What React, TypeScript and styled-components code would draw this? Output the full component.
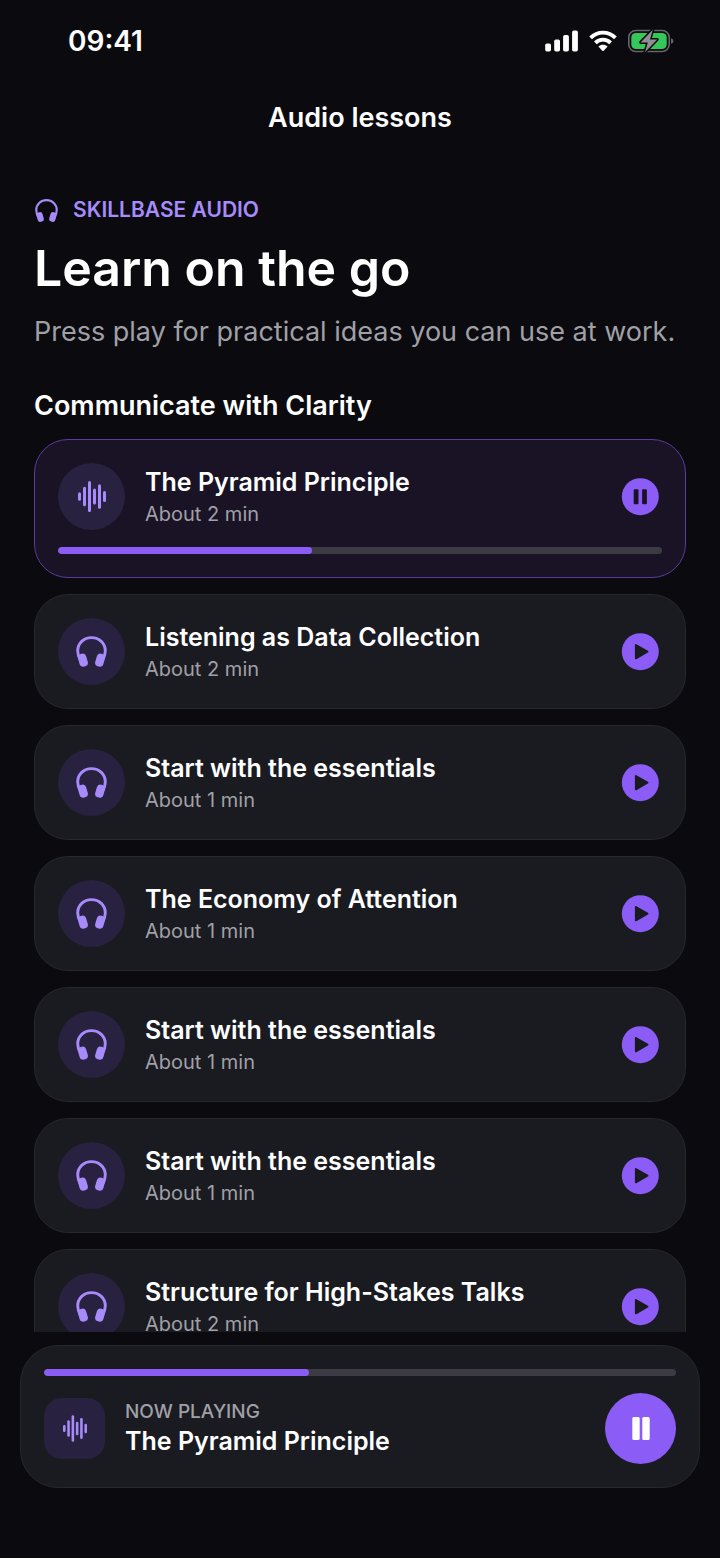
import React from "react";
import styled, { createGlobalStyle, css } from "styled-components";

const color = {
  page: "#0a0a0f",
  card: "#1a1a21",
  cardLine: "#27272c",
  active: "#191325",
  activeLine: "#5a3d9b",
  badge: "#292140",
  accent: "#8b5cf6",
  accentSoft: "#a78bfa",
  track: "#3c3b44",
  text: "#ffffff",
  muted: "#a0a0a7",
};

const GlobalStyle = createGlobalStyle`
  * { box-sizing: border-box; }
  body {
    margin: 0;
    background: ${color.page};
    color: ${color.text};
    font-family: Inter, "Liberation Sans", sans-serif;
  }
  h1, h2, h3, p, ul { margin: 0; padding: 0; }
`;

const Screen = styled.div`
  display: flex;
  flex-direction: column;
  height: 100vh;
  background: ${color.page};
`;

const StatusBar = styled.div`
  display: flex;
  align-items: center;
  justify-content: space-between;
  flex: none;
  height: 82px;
  padding: 0 46px 0 68px;
`;

const Clock = styled.time`
  font-size: 28px;
  line-height: 34px;
  font-weight: 600;
`;

const StatusIcons = styled.div`
  display: flex;
  align-items: center;
  gap: 11px;
  svg { display: block; }
`;

const NavBar = styled.header`
  display: flex;
  align-items: center;
  justify-content: center;
  flex: none;
  height: 72px;
`;

const NavTitle = styled.h2`
  font-size: 27px;
  line-height: 34px;
  font-weight: 600;
`;

const Content = styled.main`
  flex: 1;
  min-height: 0;
  overflow-y: auto;
  scrollbar-width: none;
  padding: 42px 34px 24px;
`;

const Eyebrow = styled.p`
  display: flex;
  align-items: center;
  gap: 15px;
  padding-left: 1px;
  color: ${color.accentSoft};
  font-size: 21px;
  line-height: 28px;
  font-weight: 600;
  svg { display: block; }
`;

const Title = styled.h1`
  margin-top: 12px;
  font-size: 50px;
  line-height: 64px;
  font-weight: 600;
`;

const Lead = styled.p`
  margin-top: 15px;
  color: ${color.muted};
  font-size: 27px;
  line-height: 34px;
`;

const SectionTitle = styled.h2`
  margin-top: 40px;
  font-size: 27px;
  line-height: 34px;
  font-weight: 600;
`;

const LessonList = styled.ul`
  display: flex;
  flex-direction: column;
  gap: 16px;
  margin-top: 16px;
  list-style: none;
`;

const LessonCard = styled.li<{ $active?: boolean }>`
  display: flex;
  flex-direction: column;
  gap: 17px;
  padding: 23px;
  border: 1px solid ${(p) => (p.$active ? color.activeLine : color.cardLine)};
  border-radius: 34px;
  background: ${(p) => (p.$active ? color.active : color.card)};
`;

const Row = styled.div`
  display: flex;
  align-items: center;
  gap: 20px;
`;

const Badge = styled.span<{ $square?: boolean }>`
  display: flex;
  align-items: center;
  justify-content: center;
  flex: none;
  color: ${color.accentSoft};
  background: ${color.badge};
  ${(p) =>
    p.$square
      ? css`
          width: 61px;
          height: 61px;
          border-radius: 18px;
        `
      : css`
          width: 67px;
          height: 67px;
          border-radius: 50%;
        `}
`;

const Labels = styled.div`
  flex: 1;
  min-width: 0;
  padding-top: 2px;
`;

const PlayerLabels = styled(Labels)`
  padding: 0 0 2px;
`;

const LessonTitle = styled.h3`
  font-size: 25px;
  line-height: 32px;
  font-weight: 600;
`;

const Duration = styled.p`
  color: ${color.muted};
  font-size: 20px;
  line-height: 32px;
`;

const Overline = styled.p`
  color: ${color.muted};
  font-size: 19px;
  line-height: 26px;
  font-weight: 500;
`;

const IconButton = styled.button`
  display: flex;
  align-items: center;
  justify-content: center;
  flex: none;
  width: 44px;
  height: 44px;
  padding: 0;
  border: 0;
  background: none;
  color: ${color.accent};
  cursor: pointer;
`;

const RoundButton = styled(IconButton)`
  width: 71px;
  height: 71px;
  border-radius: 50%;
  background: ${color.accent};
  color: ${color.text};
`;

const Track = styled.div`
  height: 7px;
  border-radius: 4px;
  background: ${color.track};
  overflow: hidden;
`;

const Fill = styled.div`
  height: 100%;
  border-radius: 4px;
  background: ${color.accent};
`;

const Player = styled.footer`
  display: flex;
  flex-direction: column;
  flex: none;
  gap: 17px;
  margin: 13px 20px 70px;
  padding: 23px;
  border: 1px solid ${color.cardLine};
  border-radius: 38px;
  background: ${color.card};
`;

const Progress = ({ value }: { value: number }) => (
  <Track role="progressbar" aria-label="Playback" aria-valuemin={0} aria-valuemax={100} aria-valuenow={value}>
    <Fill style={{ width: `${value}%` }} />
  </Track>
);

const Headphones = ({ size = 31 }: { size?: number }) => (
  <svg width={size} height={size} viewBox="0 0 31 31" aria-hidden="true">
    <path
      d="M4.4 24C2.4 20.6 1.7 18 1.7 14.8C1.7 7.2 7.8 1.6 15.5 1.6C23.2 1.6 29.3 7.2 29.3 14.8C29.3 18 28.6 20.6 26.6 24"
      fill="none"
      stroke="currentColor"
      strokeWidth="2.9"
    />
    <g fill="currentColor">
      <rect x="2.7" y="17.7" width="8.4" height="13" rx="3.6" transform="rotate(-16 6.9 24.2)" />
      <rect x="19.9" y="17.7" width="8.4" height="13" rx="3.6" transform="rotate(16 24.1 24.2)" />
    </g>
  </svg>
);

const Waveform = ({ width = 28, height = 31 }: { width?: number; height?: number }) => (
  <svg width={width} height={height} viewBox="0 0 28 31" fill="currentColor" aria-hidden="true">
    {[8.4, 19.4, 31, 16, 24.6, 11].map((h, i) => (
      <rect key={i} x={i * 5} y={(31 - h) / 2} width="3" height={h} rx="1.5" />
    ))}
  </svg>
);

const PlayCircle = () => (
  <svg width="38" height="38" viewBox="0 0 38 38" aria-hidden="true">
    <circle cx="19.3" cy="18.7" r="18.5" fill={color.accent} />
    <path d="M14.9 12.1L26.4 18.7L14.9 25.3Z" fill={color.card} stroke={color.card} strokeWidth="2" strokeLinejoin="round" />
  </svg>
);

const PauseCircle = () => (
  <svg width="38" height="38" viewBox="0 0 38 38" aria-hidden="true">
    <circle cx="19.3" cy="18.7" r="18.5" fill={color.accent} />
    <rect x="12.7" y="11.2" width="4.8" height="15" rx="1" fill={color.active} />
    <rect x="21.1" y="11.2" width="4.8" height="15" rx="1" fill={color.active} />
  </svg>
);

const Signal = () => (
  <svg width="34" height="22" viewBox="0 0 34 22" fill="#fff" aria-hidden="true">
    <rect x="1.2" y="13.5" width="5.8" height="8" rx="1.7" />
    <rect x="10.2" y="9.5" width="5.8" height="12" rx="1.7" />
    <rect x="19.1" y="5" width="5.8" height="16.5" rx="1.7" />
    <rect x="28.1" y="0.5" width="5.8" height="21" rx="1.7" />
  </svg>
);

const Wifi = () => (
  <svg width="28" height="22" viewBox="0 0 28 22" aria-hidden="true">
    <g fill="none" stroke="#fff" strokeWidth="3.8">
      <path d="M1.6 7.9C8.4 0.9 19.6 0.9 26.4 7.9" />
      <path d="M6.4 12.8C10.6 8.6 17.4 8.6 21.6 12.8" />
    </g>
    <path d="M9.4 16.5C12 14.3 16 14.3 18.6 16.5L14.7 20.7Q14 21.4 13.3 20.7Z" fill="#fff" />
  </svg>
);

const Battery = () => (
  <svg width="46" height="26" viewBox="0 0 46 26" aria-hidden="true">
    <rect x="0.8" y="2.5" width="40.4" height="21" rx="7" fill="none" stroke="#66666a" strokeWidth="1.6" />
    <rect x="3.3" y="5" width="35.4" height="16" rx="4.6" fill="#34c759" />
    <path d="M43 10.2C46.2 11 46.2 15 43 15.8Z" fill="#66666a" />
    <path
      d="M24.8 1.8L12.6 14.4H19.8L17 24.2L29.2 11.4H22Z"
      fill="#8e8e93"
      stroke={color.page}
      strokeWidth="3"
      strokeLinejoin="round"
      paintOrder="stroke"
    />
  </svg>
);

const Pause = () => (
  <svg width="18" height="23" viewBox="0 0 18 23" fill="currentColor" aria-hidden="true">
    <rect x="0.3" width="7.4" height="23" rx="1.6" />
    <rect x="10.3" width="7.4" height="23" rx="1.6" />
  </svg>
);

const lessons = [
  { title: "The Pyramid Principle", minutes: 2, progress: 42 },
  { title: "Listening as Data Collection", minutes: 2 },
  { title: "Start with the essentials", minutes: 1 },
  { title: "The Economy of Attention", minutes: 1 },
  { title: "Start with the essentials", minutes: 1 },
  { title: "Start with the essentials", minutes: 1 },
  { title: "Structure for High-Stakes Talks", minutes: 2 },
];

export default function App() {
  return (
    <Screen>
      <GlobalStyle />
      <StatusBar>
        <Clock>09:41</Clock>
        <StatusIcons>
          <Signal />
          <Wifi />
          <Battery />
        </StatusIcons>
      </StatusBar>
      <NavBar>
        <NavTitle>Audio lessons</NavTitle>
      </NavBar>
      <Content>
        <Eyebrow>
          <Headphones size={23} />
          SKILLBASE AUDIO
        </Eyebrow>
        <Title>Learn on the go</Title>
        <Lead>Press play for practical ideas you can use at work.</Lead>
        <SectionTitle>Communicate with Clarity</SectionTitle>
        <LessonList>
          {lessons.map(({ title, minutes, progress }, i) => {
            const active = progress !== undefined;
            return (
              <LessonCard key={i} $active={active}>
                <Row>
                  <Badge>{active ? <Waveform /> : <Headphones />}</Badge>
                  <Labels>
                    <LessonTitle>{title}</LessonTitle>
                    <Duration>About {minutes} min</Duration>
                  </Labels>
                  <IconButton type="button" aria-label={`${active ? "Pause" : "Play"} ${title}`}>
                    {active ? <PauseCircle /> : <PlayCircle />}
                  </IconButton>
                </Row>
                {progress !== undefined && <Progress value={progress} />}
              </LessonCard>
            );
          })}
        </LessonList>
      </Content>
      <Player>
        <Progress value={42} />
        <Row>
          <Badge $square>
            <Waveform width={24} height={27} />
          </Badge>
          <PlayerLabels>
            <Overline>NOW PLAYING</Overline>
            <LessonTitle>The Pyramid Principle</LessonTitle>
          </PlayerLabels>
          <RoundButton type="button" aria-label="Pause">
            <Pause />
          </RoundButton>
        </Row>
      </Player>
    </Screen>
  );
}
